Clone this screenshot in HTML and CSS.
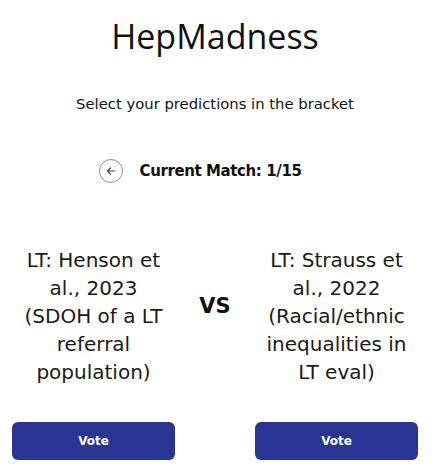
FILE: index.html
```html
<!DOCTYPE html>
<html lang="en">
<head>
<meta charset="utf-8">
<title>HepMadness</title>
<link rel="stylesheet" href="styles.css">
</head>
<body>
<main class="page">
  <h1 class="title">HepMadness</h1>
  <p class="subtitle">Select your predictions in the bracket</p>
  <div class="match-row">
    <button class="back-btn" aria-label="Previous match">
      <svg width="10" height="10" viewBox="0 0 10 10" fill="none" stroke="#444" stroke-width="1.2" stroke-linecap="round" stroke-linejoin="round"><path d="M8.5 5H1.5M4.5 2L1.5 5L4.5 8"/></svg>
    </button>
    <span class="match-label">Current Match: 1/15</span>
  </div>
  <section class="bracket">
    <div class="contestant">LT: Henson et al., 2023 (SDOH of a LT referral population)</div>
    <div class="vs">VS</div>
    <div class="contestant">LT: Strauss et al., 2022 (Racial/ethnic inequalities in LT eval)</div>
    <button class="vote-btn">Vote</button>
    <div></div>
    <button class="vote-btn">Vote</button>
  </section>
</main>
</body>
</html>
```

FILE: styles.css
```css
* { box-sizing: border-box; }
html, body { margin: 0; padding: 0; background: #ffffff; }
body { font-family: "DejaVu Sans", "Open Sans", sans-serif; color: #111; }

.page {
  width: 439px;
  padding: 16px 21px 0 12px;
  display: flex;
  flex-direction: column;
  align-items: stretch;
}

.title {
  margin: 0;
  font-family: "Open Sans", sans-serif;
  font-weight: 400;
  font-size: 34px;
  line-height: 40px;
  text-align: center;
  color: #111;
}

.subtitle {
  margin: 38px 0 0;
  font-size: 14.8px;
  line-height: 20px;
  text-align: center;
  color: #111;
}

.match-row {
  margin-top: 45px;
  height: 24px;
  display: flex;
  align-items: center;
  justify-content: center;
  gap: 17px;
  padding-right: 30px;
}

.back-btn {
  width: 24px;
  height: 24px;
  border-radius: 50%;
  border: 1.5px solid #7f87d6;
  background: #fff;
  padding: 0;
  display: flex;
  align-items: center;
  justify-content: center;
}

.match-label {
  font-weight: 700;
  font-size: 15px;
  letter-spacing: -0.4px;
  line-height: 24px;
  color: #111;
}

.bracket {
  margin-top: 63px;
  display: grid;
  grid-template-columns: 163px 1fr 163px;
  row-gap: 36px;
}

.contestant {
  padding: 0 6px;
  font-size: 20px;
  line-height: 28px;
  text-align: center;
  color: #1a1a1a;
}

.vs {
  align-self: center;
  margin-bottom: 20px;
  text-align: center;
  font-weight: 800;
  font-size: 21px;
  line-height: 28px;
  color: #111;
}

.vote-btn {
  height: 38px;
  border: none;
  border-radius: 6px;
  background: #283593;
  color: #fff;
  font-family: "DejaVu Sans", sans-serif;
  font-weight: 700;
  font-size: 12px;
}
```
